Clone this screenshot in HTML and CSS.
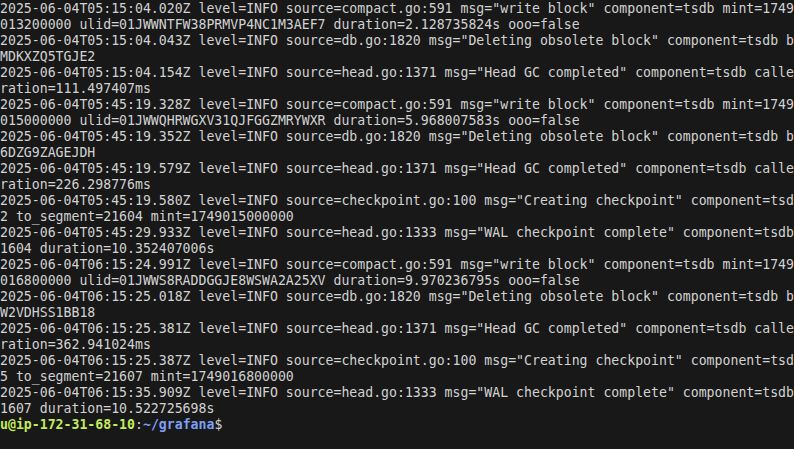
FILE: index.html
```html
<!DOCTYPE html>
<html>
<head>
<meta charset="utf-8">
<link rel="stylesheet" href="styles.css">
</head>
<body>
<div class="terminal"><pre class="output">2025-06-04T05:15:04.020Z level=INFO source=compact.go:591 msg="write block" component=tsdb mint=1749
013200000 ulid=01JWWNTFW38PRMVP4NC1M3AEF7 duration=2.128735824s ooo=false
2025-06-04T05:15:04.043Z level=INFO source=db.go:1820 msg="Deleting obsolete block" component=tsdb b
MDKXZQ5TGJE2
2025-06-04T05:15:04.154Z level=INFO source=head.go:1371 msg="Head GC completed" component=tsdb calle
ration=111.497407ms
2025-06-04T05:45:19.328Z level=INFO source=compact.go:591 msg="write block" component=tsdb mint=1749
015000000 ulid=01JWWQHRWGXV31QJFGGZMRYWXR duration=5.968007583s ooo=false
2025-06-04T05:45:19.352Z level=INFO source=db.go:1820 msg="Deleting obsolete block" component=tsdb b
6DZG9ZAGEJDH
2025-06-04T05:45:19.579Z level=INFO source=head.go:1371 msg="Head GC completed" component=tsdb calle
ration=226.298776ms
2025-06-04T05:45:19.580Z level=INFO source=checkpoint.go:100 msg="Creating checkpoint" component=tsd
2 to_segment=21604 mint=1749015000000
2025-06-04T05:45:29.933Z level=INFO source=head.go:1333 msg="WAL checkpoint complete" component=tsdb
1604 duration=10.352407006s
2025-06-04T06:15:24.991Z level=INFO source=compact.go:591 msg="write block" component=tsdb mint=1749
016800000 ulid=01JWWS8RADDGGJE8WSWA2A25XV duration=9.970236795s ooo=false
2025-06-04T06:15:25.018Z level=INFO source=db.go:1820 msg="Deleting obsolete block" component=tsdb b
W2VDHSS1BB18
2025-06-04T06:15:25.381Z level=INFO source=head.go:1371 msg="Head GC completed" component=tsdb calle
ration=362.941024ms
2025-06-04T06:15:25.387Z level=INFO source=checkpoint.go:100 msg="Creating checkpoint" component=tsd
5 to_segment=21607 mint=1749016800000
2025-06-04T06:15:35.909Z level=INFO source=head.go:1333 msg="WAL checkpoint complete" component=tsdb
1607 duration=10.522725698s
<span class="user">u@ip-172-31-68-10</span>:<span class="path">~/grafana</span>$</pre></div>
</body>
</html>
```
FILE: styles.css
```css
html, body {
  margin: 0;
  padding: 0;
  background: #181818;
}
.terminal {
  width: 794px;
  height: 449px;
  overflow: hidden;
  background: #181818;
  padding-top: 1px;
  box-sizing: border-box;
}
.output {
  margin: 0;
  padding: 0;
  font-family: "DejaVu Sans Mono", monospace;
  font-size: 13.2px;
  line-height: 16px;
  color: #d2d2d2;
  white-space: pre;
}
.user {
  color: #c4ea5c;
  font-weight: bold;
}
.path {
  color: #7d9ef2;
  font-weight: bold;
}
```
